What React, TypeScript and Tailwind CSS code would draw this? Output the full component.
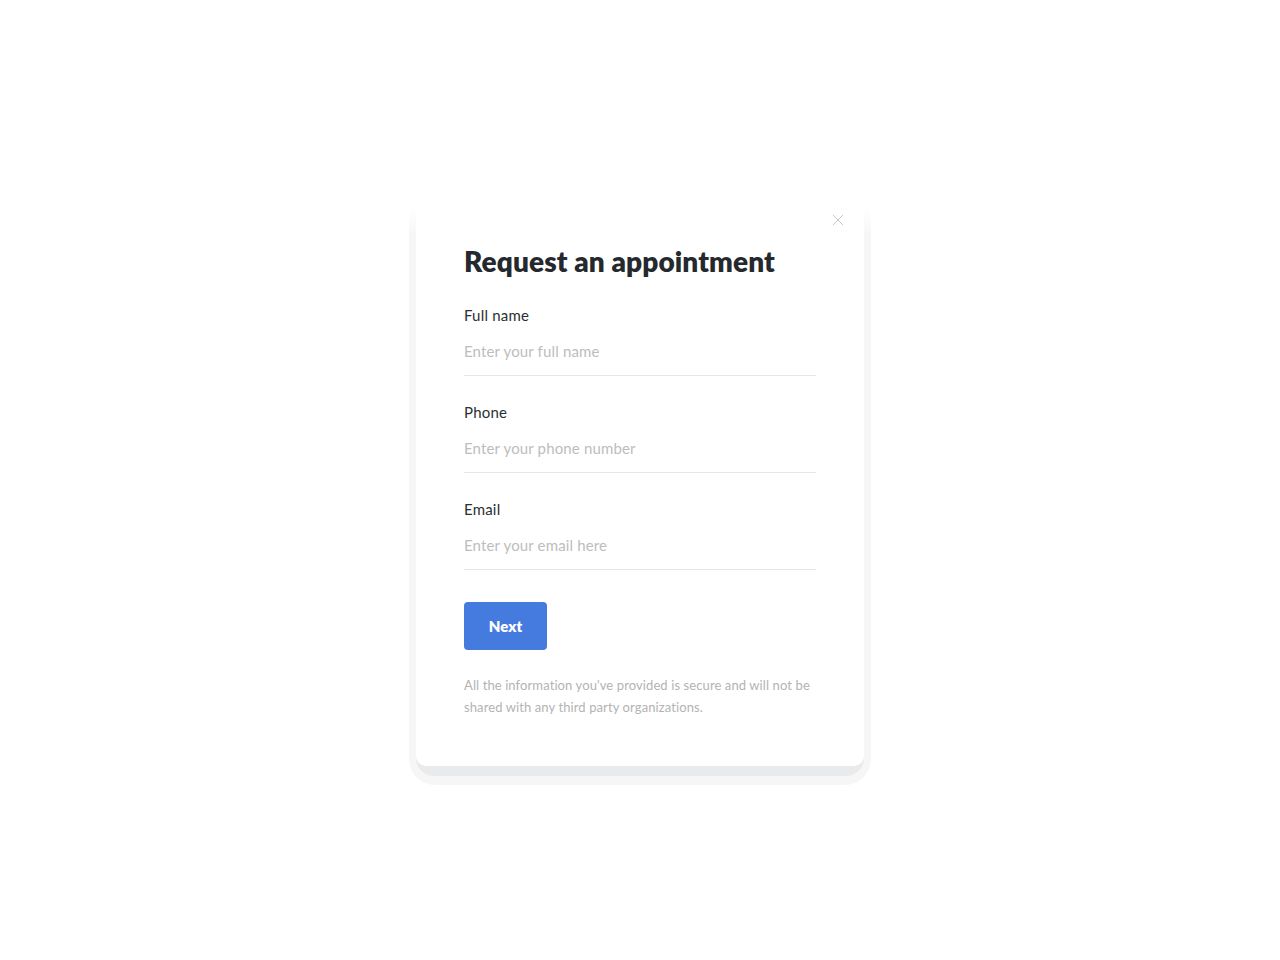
import React from "react";

const font = { fontFamily: "Lato, 'Noto Sans', sans-serif" };

function Field({ label, placeholder }: { label: string; placeholder: string }) {
  return (
    <div className="flex flex-col">
      <label className="text-[15px] leading-[20px] tracking-[0.2px] text-[#2b2f33]">{label}</label>
      <input
        className="mt-[14px] h-[24px] border-0 bg-transparent p-0 text-[15px] leading-[24px] tracking-[0.15px] text-[#2b2f33] outline-none placeholder:text-[#bdbdbd]"
        placeholder={placeholder}
        style={font}
      />
      <div className="mt-[12px] h-px bg-[#e6e6e6]" />
    </div>
  );
}

export default function App() {
  return (
    <div className="min-h-[960px] w-full bg-white pt-[195px]" style={font}>
      <div className="mx-auto w-[462px] rounded-[26px] bg-[linear-gradient(to_bottom,#ffffff_0px,#ffffff_12px,#f6f6f6_40px)] px-[7px] pb-[19px] pt-[5px]">
        <div className="relative">
          <div className="absolute inset-x-0 bottom-[-10px] h-[60px] rounded-b-[18px] bg-[#e9eaec]" />
          <div className="relative rounded-b-[10px] bg-white px-[48px] pb-[48px] pt-[44px]">
            <button className="absolute right-[20px] top-[14px] flex h-[12px] w-[12px] items-center justify-center">
              <svg width="12" height="12" viewBox="0 0 12 12" fill="none" stroke="#c8c8c8" strokeWidth="1">
                <path d="M1 1L11 11M11 1L1 11" />
              </svg>
            </button>
            <h1 className="text-[28px] font-extrabold leading-[34px] tracking-[0.1px] text-[#25292e]">
              Request an appointment
            </h1>
            <div className="mt-[27px] flex flex-col gap-[26px]">
              <Field label="Full name" placeholder="Enter your full name" />
              <Field label="Phone" placeholder="Enter your phone number" />
              <Field label="Email" placeholder="Enter your email here" />
            </div>
            <button className="mt-[32px] h-[48px] w-[83px] rounded-[4px] bg-[#457ade] text-[15px] font-extrabold text-white">
              Next
            </button>
            <p className="mt-[24px] text-[13px] leading-[22px] tracking-[0.1px] text-[#b3b3b3]">
              All the information you've provided is secure and will not be shared with any third party organizations.
            </p>
          </div>
        </div>
      </div>
    </div>
  );
}
